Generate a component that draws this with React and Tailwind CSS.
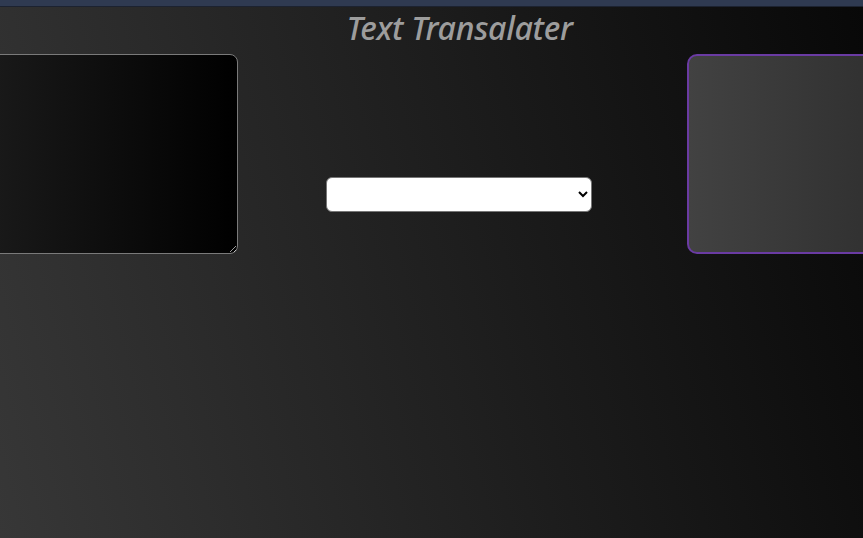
import React from 'react';

export default function App() {
  return (
    <div className="h-[538px] w-[863px] overflow-hidden bg-[linear-gradient(75deg,#373737,#080808)] font-['Open_Sans',sans-serif]">
      {/* top strip */}
      <div className="h-[6px] bg-[#2f3a51]" />
      <div className="h-px bg-[#1c2230]" />

      <div className="w-[1050px] ml-[-63px]">
        <h1 className="text-center text-[32px] leading-[42px] italic font-medium text-[#9d9d9d] tracking-[-0.3px] pr-[5px] font-['Noto_Sans',sans-serif]">
          Text Transalater
        </h1>

        <div className="flex items-start mt-[5px]">
          <textarea
            className="w-[301px] h-[200px] shrink-0 rounded-[8px] border border-[#7a7a7a] bg-[linear-gradient(to_right,#1f1f1f,#000000)] text-white outline-none"
          />
          <select className="ml-[88px] mt-[123px] w-[266px] h-[35px] shrink-0 rounded-[6px] border border-[#767676] bg-white text-black text-sm">
            <option value=""></option>
          </select>
          <div className="ml-[95px] w-[300px] h-[200px] shrink-0 rounded-[10px] border-2 border-[#6a3ba3] bg-[linear-gradient(to_right,#424242,#262626)]" />
        </div>
      </div>
    </div>
  );
}
